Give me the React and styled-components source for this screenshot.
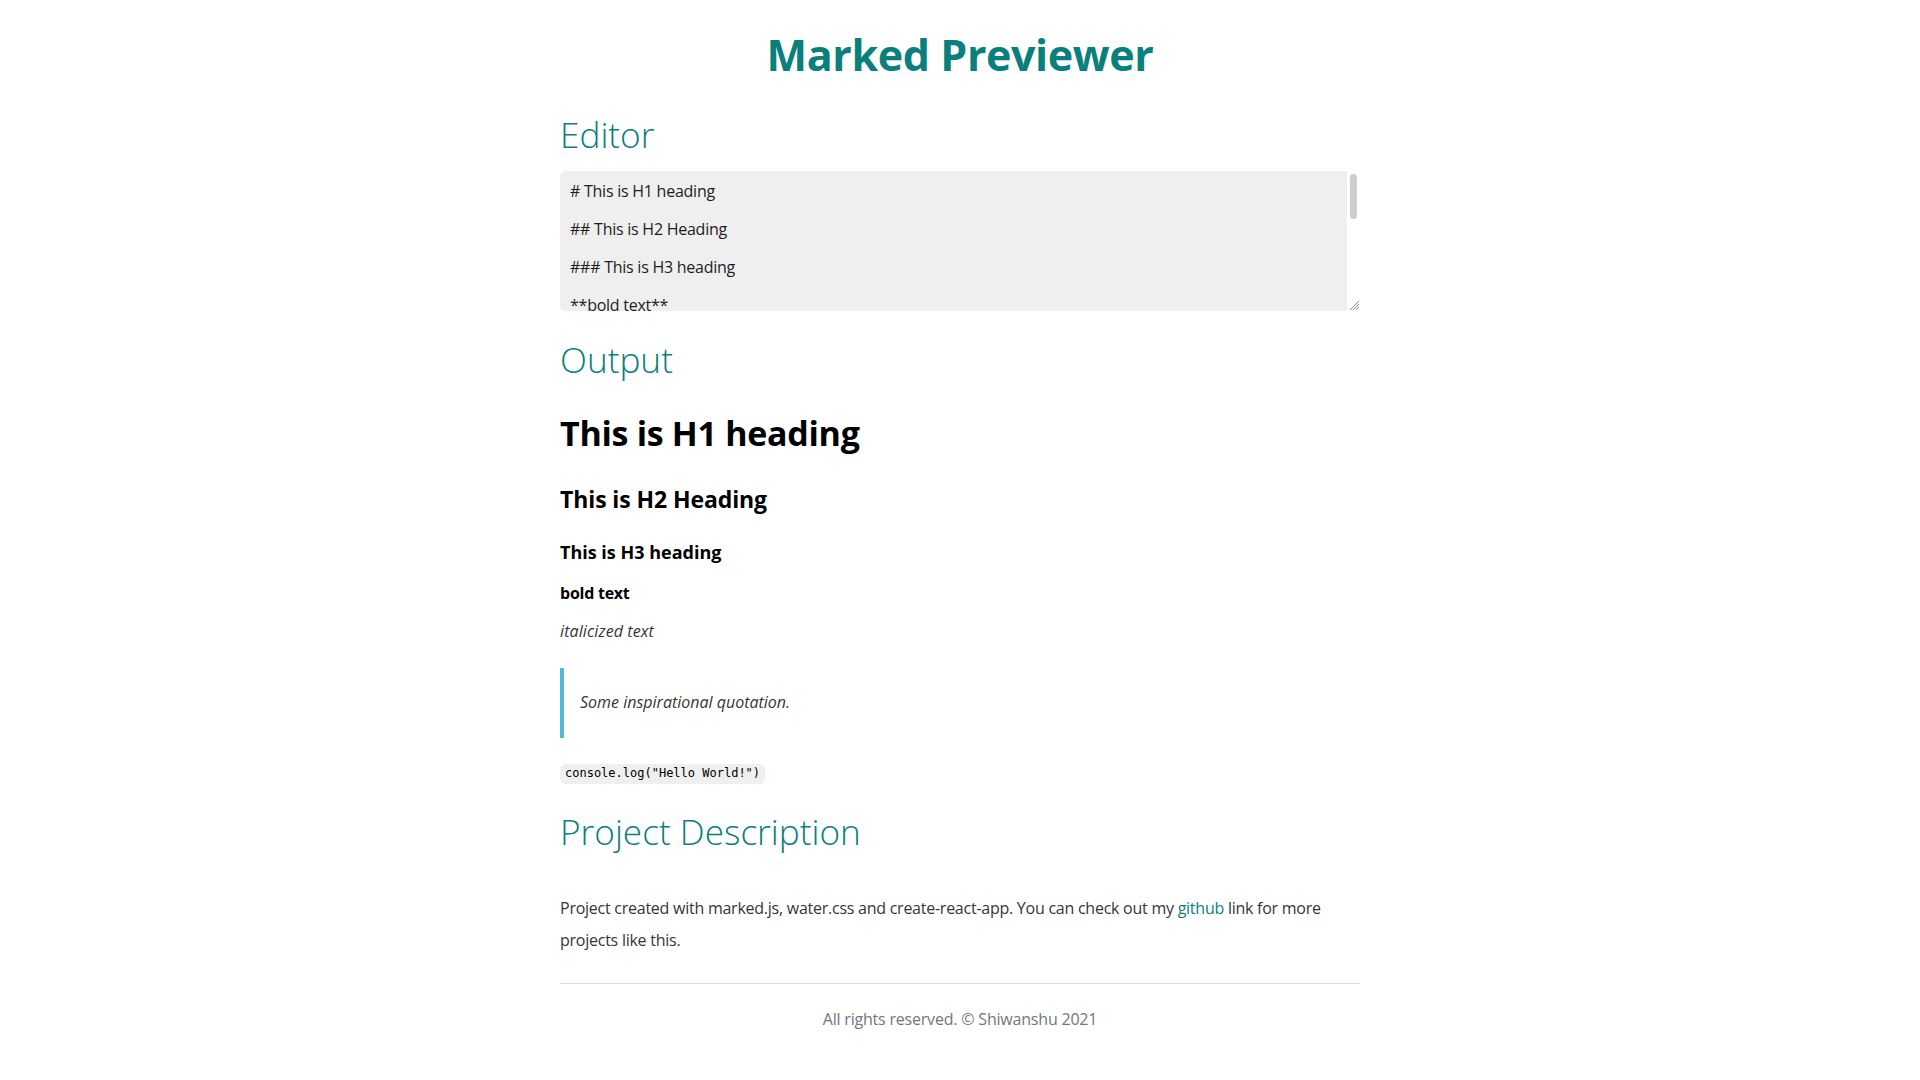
import React from "react";
import styled, { createGlobalStyle } from "styled-components";

const GlobalStyle = createGlobalStyle`
  html, body { margin: 0; padding: 0; background: #fff; }
  body {
    font-family: "Open Sans", "Noto Sans", sans-serif;
    color: #363636;
    font-size: 16px;
    line-height: 1.4;
  }
`;

const Page = styled.main`
  width: 800px;
  margin: 0 auto;
  padding-top: 28px;
`;

const Title = styled.h1`
  margin: 0;
  text-align: center;
  font-size: 43px;
  line-height: 54px;
  font-weight: 700;
  letter-spacing: -0.4px;
  color: #0a807d;
`;

const SectionTitle = styled.h2`
  margin: ${(p) => p.$top}px 0 0;
  font-size: 35.2px;
  line-height: 42px;
  font-weight: 300;
  color: #0a807d;
`;

const EditorFrame = styled.div`
  position: relative;
  margin-top: 16px;
  height: 140px;
`;

const Editor = styled.textarea`
  display: block;
  box-sizing: border-box;
  width: 100%;
  height: 140px;
  margin: 0;
  padding: 11px 24px 10px 10px;
  border: none;
  border-radius: 6px;
  background: #efefef;
  color: #1d1d1d;
  font-family: inherit;
  font-size: 16px;
  letter-spacing: -0.25px;
  line-height: 19px;
  overflow: hidden;
  resize: none;
  outline: none;
`;

const ScrollTrack = styled.div`
  position: absolute;
  top: 0;
  right: 0;
  bottom: 0;
  width: 13px;
  background: #fff;
`;

const ScrollThumb = styled.div`
  position: absolute;
  top: 3px;
  left: 3px;
  width: 7px;
  height: 45px;
  border-radius: 4px;
  background: #cdcdcd;
`;

const Grip = styled.svg`
  position: absolute;
  right: 1px;
  bottom: 1px;
  width: 10px;
  height: 10px;
`;

const Heading = styled.div`
  margin: ${(p) => p.$top}px 0 0;
  font-size: ${(p) => p.$size}px;
  line-height: ${(p) => p.$lh}px;
  letter-spacing: ${(p) => p.$ls || 0}px;
  font-weight: 700;
  color: #000;
`;

const Para = styled.p`
  margin: ${(p) => p.$top}px 0 0;
  line-height: ${(p) => p.$lh || 22.4}px;
  letter-spacing: ${(p) => (p.$italic ? 0.1 : -0.25)}px;
  font-style: ${(p) => (p.$italic ? "italic" : "normal")};
`;

const Strong = styled.strong`
  color: #000;
  font-weight: 700;
`;

const Quote = styled.blockquote`
  margin: 25.6px 0 0;
  padding: 8px 16px;
  border-left: 4px solid #0096bfab;
  font-style: italic;

  p { margin: 15px 0 17px; line-height: 22.4px; }
`;

const CodeLine = styled.div`
  margin-top: 26px;
  line-height: 20px;
  height: 20px;
`;

const Code = styled.code`
  display: inline-block;
  vertical-align: top;
  height: 20px;
  box-sizing: border-box;
  padding: 2.5px 5px;
  border-radius: 6px;
  background: #efefef;
  color: #000;
  font-family: "DejaVu Sans Mono", "Liberation Mono", monospace;
  font-size: 12px;
  line-height: 15px;
`;

const Link = styled.a`
  color: #0a807d;
  text-decoration: none;
`;

const Rule = styled.hr`
  margin: 25.8px 0 0;
  border: none;
  border-top: 1px solid #dbdbdb;
`;

const Footer = styled.footer`
  margin-top: 24px;
  text-align: center;
  color: #70777f;
  letter-spacing: -0.2px;
  line-height: 22.4px;
  padding-bottom: 40px;
`;

const markdown = `# This is H1 heading

## This is H2 Heading

### This is H3 heading

**bold text**

*italicized text*

> Some inspirational quotation.

\`console.log("Hello World!")\`
`;

export default function App() {
  return (
    <>
      <GlobalStyle />
      <Page>
        <Title>Marked Previewer</Title>
        <SectionTitle $top={30.8}>Editor</SectionTitle>
        <EditorFrame>
          <Editor defaultValue={markdown} spellCheck={false} />
          <ScrollTrack>
            <ScrollThumb />
            <Grip viewBox="0 0 10 10">
              <line x1="1" y1="10" x2="10" y2="1" stroke="#8a8a8a" strokeWidth="1" />
              <line x1="4" y1="10" x2="10" y2="4" stroke="#8a8a8a" strokeWidth="1" />
              <line x1="7" y1="10" x2="10" y2="7" stroke="#8a8a8a" strokeWidth="1" />
            </Grip>
          </ScrollTrack>
        </EditorFrame>
        <SectionTitle $top={27.4}>Output</SectionTitle>
        <section>
          <Heading $top={31.6} $size={34} $lh={42} $ls={-0.3}>This is H1 heading</Heading>
          <Heading $top={31.7} $size={23} $lh={29} $ls={-0.1}>This is H2 Heading</Heading>
          <Heading $top={27} $size={18} $lh={23}>This is H3 heading</Heading>
          <Para $top={17.4}><Strong>bold text</Strong></Para>
          <Para $top={15.3} $italic>italicized text</Para>
          <Quote><p>Some inspirational quotation.</p></Quote>
          <CodeLine><Code>console.log("Hello World!")</Code></CodeLine>
        </section>
        <SectionTitle $top={26.4}>Project Description</SectionTitle>
        <Para $top={39.5} $lh={32.5}>
          Project created with marked.js, water.css and create-react-app. You can check out my{" "}
          <Link href="#">github</Link> link for more projects like this.
        </Para>
        <Rule />
        <Footer>All rights reserved. © Shiwanshu 2021</Footer>
      </Page>
    </>
  );
}
